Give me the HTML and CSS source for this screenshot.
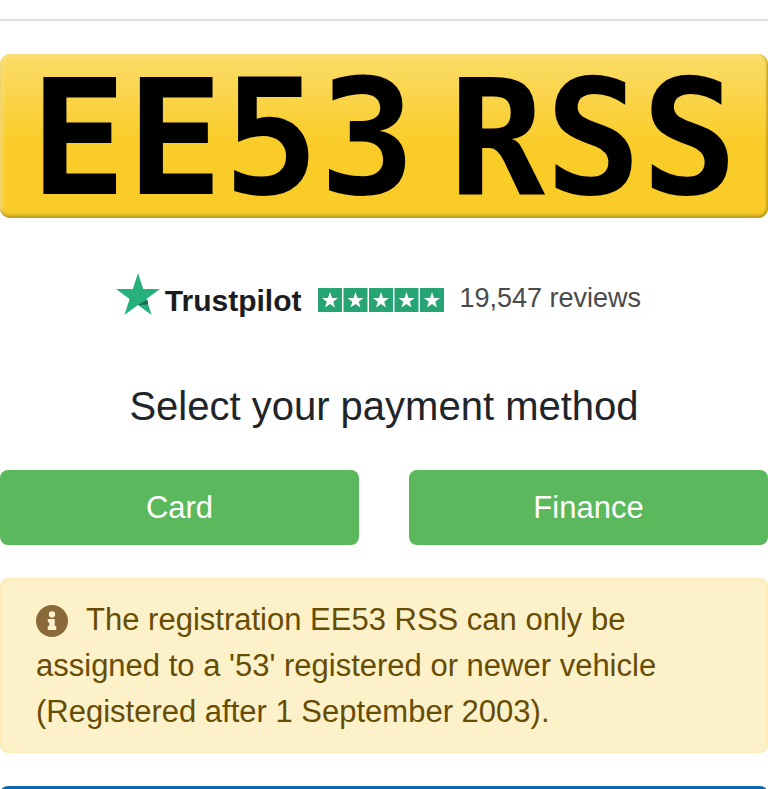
FILE: index.html
```html
<!DOCTYPE html>
<html lang="en">
<head>
<meta charset="UTF-8">
<meta name="viewport" content="width=device-width, initial-scale=1">
<title>EE53 RSS - Select your payment method</title>
<link rel="stylesheet" href="styles.css">
</head>
<body>
<hr class="divider">
<main>
  <div class="plate"><span>EE53</span> <span>RSS</span></div>

  <!-- Reviews -->
  <div class="reviews">
    <div class="brand">
      <svg class="brand-star" viewBox="0 0 44 42" aria-hidden="true">
        <path fill="#26b07c" d="M22 0 L27.2 16 H44 L30.4 25.9 L35.6 42 L22 32 L8.4 42 L13.6 25.9 L0 16 H16.8Z"/>
        <path fill="#146b50" d="M31.5 26.5 L32 31.5 L22 32Z"/>
      </svg>
      <span class="brand-name">Trustpilot</span>
    </div>
    <svg class="rating" viewBox="0 0 126 24" role="img" aria-label="5 stars">
      <defs>
        <g id="star">
          <rect width="24" height="24" fill="#26a474"/>
          <path fill="#fff" d="M12 4 L14 10 H20 L15.200 13.700 L17 19.500 L12 16 L7 19.500 L8.800 13.700 L4 10 H10Z"/>
        </g>
      </defs>
      <use href="#star"/>
      <use href="#star" x="25.500"/>
      <use href="#star" x="51"/>
      <use href="#star" x="76.500"/>
      <use href="#star" x="102"/>
    </svg>
    <span class="review-count">19,547 reviews</span>
  </div>

  <!-- Payment -->
  <h2>Select your payment method</h2>
  <div class="methods">
    <button type="button" class="btn">Card</button>
    <button type="button" class="btn">Finance</button>
  </div>

  <div class="alert">
    <svg class="info" viewBox="0 0 512 512" aria-hidden="true">
      <circle cx="256" cy="256" r="256" fill="#8a6a38"/>
      <circle cx="256" cy="150" r="50" fill="#fff3cd"/>
      <path fill="#fff3cd" d="M204 222 h84 q12 0 12 12 v102 h12 q12 0 12 12 v40 q0 12 -12 12 h-112 q-12 0 -12 -12 v-40 q0 -12 12 -12 h12 v-58 h-12 q-12 0 -12 -12 v-32 q0 -12 16 -12Z"/>
    </svg>
    The registration EE53 RSS can only be assigned to a '53' registered or newer vehicle (Registered after 1 September 2003).
  </div>

  <div class="panel"></div>
</main>
</body>
</html>
```
FILE: styles.css
```css
*{box-sizing:border-box;}
body{margin:0;padding-top:19px;background:#fff;color:#212529;font-family:"Liberation Sans", Arial, sans-serif;font-size:31px;line-height:46px;overflow-x:hidden;}
.divider{height:2px;margin:0 0 33px;border:0;background:#e2e2e2;}

.plate{display:flex;justify-content:center;gap:33px;height:164px;border-radius:10px;font-family:"DejaVu Sans Mono", monospace;font-weight:700;font-size:160px;line-height:170px;color:#000;white-space:nowrap;background:linear-gradient(#fbdc68, #f9cc28 55%, #f9cc28);box-shadow:inset 0 -4px 4px -2px #a98b1c, inset -3px 0 3px -2px #b8961e, inset 3px 2px 4px -1px #fbe28a;}

.reviews{display:flex;align-items:center;justify-content:center;gap:16px;height:60px;margin-top:50px;padding-right:11px;}
.brand{display:flex;align-items:flex-end;gap:5px;padding-bottom:4px;}
.brand-star{width:44px;height:42px;margin-bottom:4px;}
.brand-name{font-weight:700;font-size:30px;line-height:36px;color:#1c1c1f;}
.rating{width:126px;height:24px;margin-top:4px;}
.review-count{font-size:27px;line-height:32px;color:#4a4a4a;}

h2{margin:54px 0 40px;font-size:40px;line-height:48px;font-weight:400;text-align:center;}
.methods{display:grid;grid-template-columns:1fr 1fr;gap:50px;}
.btn{height:75px;border:0;border-radius:8px;background:#5cb85c;color:#fff;font:inherit;cursor:pointer;}
.btn:hover{background:#4a9f4a;}

.alert{margin-top:33px;padding:17px 34px 16px;border:2px solid #fdecba;border-radius:8px;background:#fdf1ca;color:#664d03;}
.info{width:32px;height:32px;margin-right:10px;vertical-align:-7px;}

.panel{height:120px;margin-top:33px;border-radius:8px;background:#0f68af;}
```
